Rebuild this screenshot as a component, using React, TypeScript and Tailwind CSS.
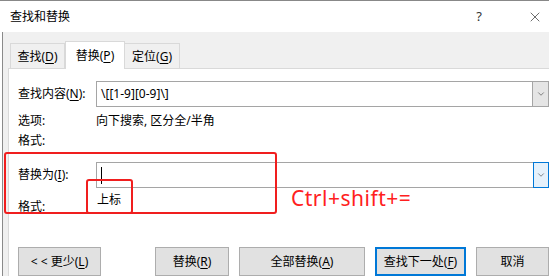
import { ChevronDown, X } from 'lucide-react';

const FONT = "font-['Segoe_UI','Noto_Sans','Noto_Sans_CJK_SC',sans-serif]";

const Key = ({ k }: { k: string }) => <span className="underline underline-offset-2">{k}</span>;

const Combo = ({ value, focused }: { value?: string; focused?: boolean }) => (
  <div className="flex h-[26px] flex-1 border border-[#a5a5a5] bg-white">
    <div className="flex flex-1 items-center pl-[4px] text-[12px] text-black">
      {value ?? <span className="h-[17px] w-px bg-black" />}
    </div>
    <div
      className={
        focused
          ? 'flex w-[16px] items-center justify-center border border-[#0078d7] bg-[#e5f1fb] -my-px -mr-px'
          : 'flex w-[16px] items-center justify-center border-l border-[#a5a5a5] bg-[#e5e5e5]'
      }
    >
      <ChevronDown className="h-[10px] w-[10px] text-[#444]" strokeWidth={1.5} />
    </div>
  </div>
);

const Btn = ({ children, w, primary }: { children: React.ReactNode; w: string; primary?: boolean }) => (
  <button
    className={`flex h-[29px] items-center justify-center bg-[#e1e1e1] text-[12px] text-black ${w} ${
      primary ? 'border-2 border-[#0078d7]' : 'border border-[#adadad]'
    }`}
  >
    {children}
  </button>
);

export default function App() {
  return (
    <div className={`${FONT} relative h-[276px] w-[549px] overflow-hidden bg-white text-[12px] text-black`}>
      {/* title bar */}
      <div className="flex h-[32px] items-center border-t border-[#888] bg-white pl-[10px]">
        <span className="text-[12px]">查找和替换</span>
        <span className="ml-auto mr-[45px] text-[13px] text-[#333]">?</span>
        <X className="mr-[6px] h-[16px] w-[16px] text-[#222]" strokeWidth={1} />
      </div>

      <div className="flex h-[244px] border-l border-[#8a8a8a] ml-[2px] bg-[#f0f0f0] pl-[5px]">
        <div className="flex flex-1 flex-col">
          {/* tabs */}
          <div className="mt-[9px] flex h-[27px] items-end pl-[2px]">
            <div className="flex h-[25px] w-[55px] items-center justify-center border border-b-0 border-[#d9d9d9] bg-[#f0f0f0] pt-[2px]">
              查找(<Key k="D" />)
            </div>
            <div className="flex h-[28px] w-[60px] items-center justify-center border border-b-0 border-[#d9d9d9] bg-white -mb-px z-10">
              替换(<Key k="P" />)
            </div>
            <div className="flex h-[25px] w-[55px] items-center justify-center border border-b-0 border-l-0 border-[#d9d9d9] bg-[#f0f0f0] pt-[2px]">
              定位(<Key k="G" />)
            </div>
          </div>

          {/* panel */}
          <div className="relative flex flex-1 flex-col border-l border-t border-[#d9d9d9] bg-white pl-[9px]">
            <div className="mt-[12px] flex items-center">
              <span className="w-[78px]">
                查找内容(<Key k="N" />):
              </span>
              <Combo value="\[[1-9][0-9]\]" />
            </div>
            <div className="mt-[4px] flex h-[20px] items-center">
              <span className="w-[78px]">选项:</span>
              <span>向下搜索, 区分全/半角</span>
            </div>
            <div className="flex h-[20px] items-center">
              <span>格式:</span>
            </div>

            <div className="mt-[11px] flex items-center">
              <span className="w-[78px]">
                替换为(<Key k="I" />):
              </span>
              <Combo focused />
            </div>
            <div className="relative h-[34px]">
              <span className="absolute left-[79px] top-[3px]">上标</span>
              <span className="absolute left-0 top-[10px]">格式:</span>
              <span className="absolute left-[273px] top-[-4px] font-['Microsoft_YaHei','Noto_Sans','Liberation_Sans',sans-serif] text-[21px] leading-[28px] tracking-[0.5px] text-[#ff2020]">
                Ctrl+shift+=
              </span>
            </div>

            {/* buttons */}
            <div className="mt-[25px] flex items-center">
              <Btn w="w-[83px]">
                &lt; &lt; 更少(<Key k="L" />)
              </Btn>
              <div className="w-[54px]" />
              <Btn w="w-[74px]">
                替换(<Key k="R" />)
              </Btn>
              <div className="w-[10px]" />
              <Btn w="w-[126px]">
                全部替换(<Key k="A" />)
              </Btn>
              <div className="w-[10px]" />
              <Btn w="w-[91px]" primary>
                查找下一处(<Key k="F" />)
              </Btn>
              <div className="w-[10px]" />
              <Btn w="w-[73px]">取消</Btn>
            </div>
          </div>
        </div>
      </div>

      {/* annotations */}
      <div className="absolute left-[4px] top-[152px] h-[62px] w-[273px] rounded-[3px] border-2 border-[#f01e1e]" />
      <div className="absolute left-[86px] top-[179px] h-[35px] w-[47px] rounded-[3px] border-2 border-[#f01e1e]" />
    </div>
  );
}
